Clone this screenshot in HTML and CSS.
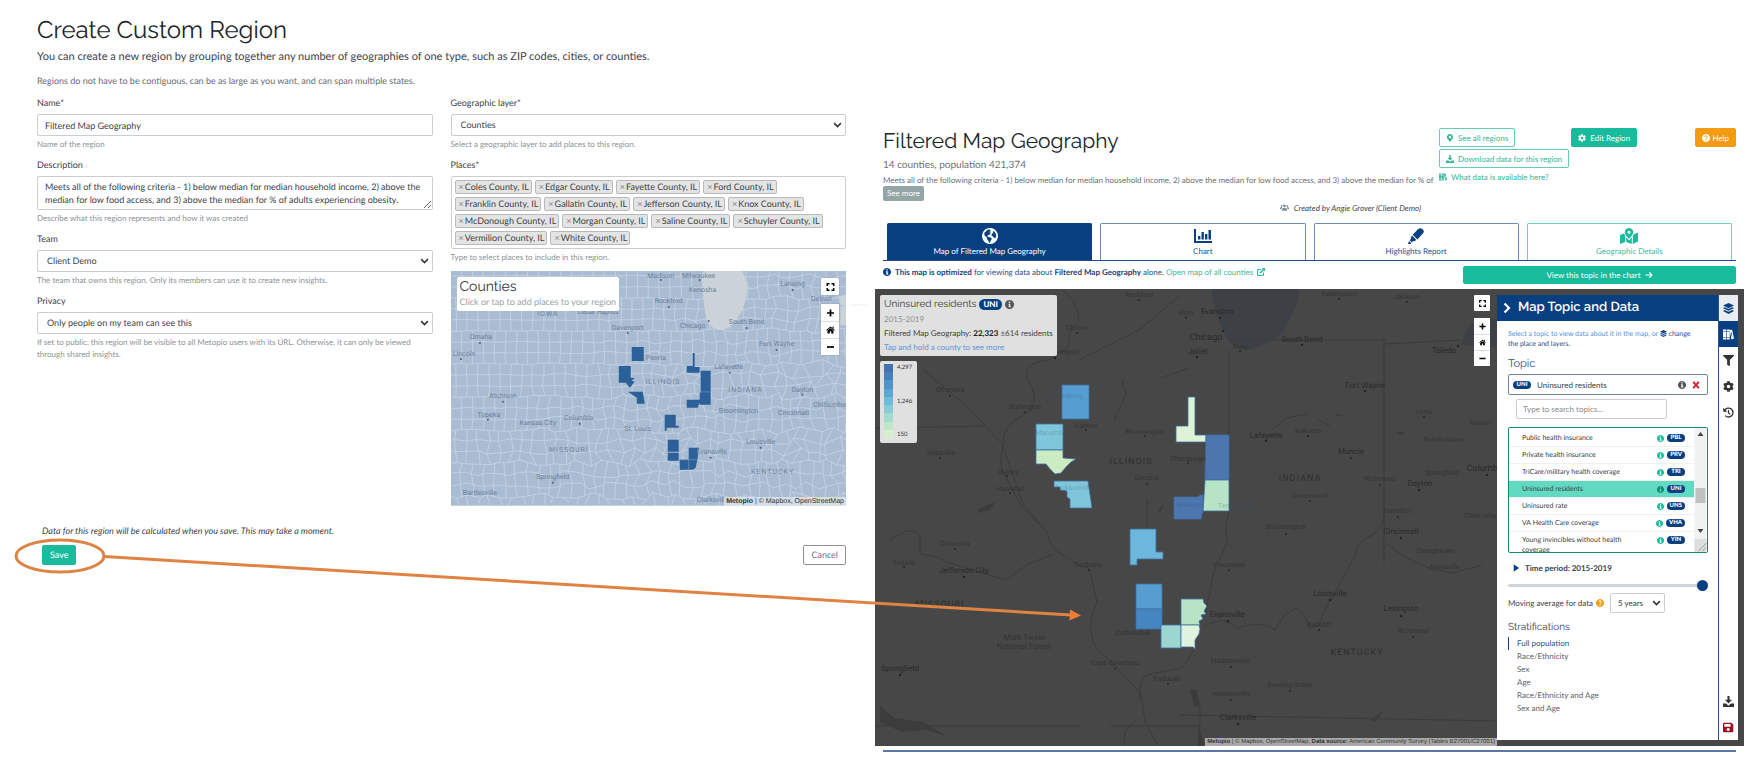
FILE: index.html
```html
<!DOCTYPE html>
<html lang="en">
<head>
<meta charset="utf-8">
<title>Create Custom Region</title>
<link rel="stylesheet" href="styles.css">
</head>
<body>
<svg class="sprite" aria-hidden="true">
  <symbol id="i-chev" viewBox="0 0 12 8"><path d="M1.5 1.5 6 6l4.5-4.5" fill="none" stroke="currentColor" stroke-width="2.2"/></symbol>
  <symbol id="i-pin" viewBox="0 0 384 512"><path d="M172.268 501.67C26.97 291.031 0 269.413 0 192 0 85.961 85.961 0 192 0s192 85.961 192 192c0 77.413-26.97 99.031-172.268 309.67-9.535 13.774-29.93 13.773-39.464 0zM192 272c44.183 0 80-35.817 80-80s-35.817-80-80-80-80 35.817-80 80 35.817 80 80 80z"/></symbol>
  <symbol id="i-cog" viewBox="0 0 512 512"><path d="M487.4 315.7l-42.6-24.6c4.3-23.2 4.3-47 0-70.2l42.6-24.6c4.9-2.8 7.1-8.6 5.5-14-11.1-35.6-30-67.8-54.7-94.6-3.8-4.1-10-5.1-14.8-2.3L380.8 110c-17.9-15.4-38.5-27.3-60.8-35.1V25.8c0-5.6-3.9-10.5-9.4-11.7-36.7-8.2-74.3-7.8-109.2 0-5.5 1.2-9.4 6.1-9.4 11.7V75c-22.2 7.9-42.8 19.8-60.8 35.1L88.7 85.5c-4.9-2.8-11-1.9-14.8 2.3-24.7 26.7-43.6 58.9-54.7 94.6-1.7 5.4.6 11.2 5.5 14L67.3 221c-4.3 23.2-4.3 47 0 70.2l-42.6 24.6c-4.9 2.8-7.1 8.6-5.5 14 11.1 35.6 30 67.8 54.7 94.6 3.8 4.1 10 5.1 14.8 2.3l42.6-24.6c17.9 15.4 38.5 27.3 60.8 35.1v49.2c0 5.6 3.9 10.5 9.4 11.7 36.7 8.2 74.3 7.8 109.2 0 5.5-1.2 9.4-6.1 9.4-11.7v-49.2c22.2-7.9 42.8-19.8 60.8-35.1l42.6 24.6c4.9 2.8 11 1.9 14.8-2.3 24.7-26.7 43.6-58.9 54.7-94.6 1.5-5.5-.7-11.3-5.6-14.1zM256 336c-44.1 0-80-35.9-80-80s35.9-80 80-80 80 35.9 80 80-35.9 80-80 80z"/></symbol>
  <symbol id="i-filter" viewBox="0 0 512 512"><path d="M487.976 0H24.028C2.71 0-8.047 25.866 7.058 40.971L192 225.941V432c0 7.831 3.821 15.17 10.237 19.662l80 55.98C298.02 518.69 320 507.493 320 487.98V225.941l184.947-184.97C520.021 25.896 509.338 0 487.976 0z"/></symbol>
  <symbol id="i-download" viewBox="0 0 16 16"><path d="M6.5 0h3v5.5h3.6L8 10.8 2.9 5.500h3.600zM0 11h4.600L8 14l3.400-3H16v5H0z"/></symbol>
  <symbol id="i-books" viewBox="0 0 18 16"><path fill-rule="evenodd" d="M0 0h5v3H0zM0 4h5v8H0zM0 13h5v3H0zM6 0h5v3H6zM6 4h5v8H6zM6 13h5v3H6zM10.800 1.200l4-1.200L18 14.600 14 16zM12.600 4.500l1.800 7 1-.300-1.700-7z"/></symbol>
  <symbol id="i-layers" viewBox="0 0 16 16"><path d="M8 0l8 3.800-8 3.800-8-3.800zM2.400 6.200L8 8.900l5.600-2.700L16 7.500l-8 3.900-8-3.900zM2.400 10.200L8 12.900l5.600-2.700L16 11.700 8 16l-8-4.300z"/></symbol>
  <symbol id="i-history" viewBox="0 0 16 16"><path d="M2.600 4.600A6.500 6.500 0 1 1 3.300 12.500" fill="none" stroke="currentColor" stroke-width="2"/><path d="M.4 1v6h6z"/><path d="M8 4.300v4.200l2.600 2" fill="none" stroke="currentColor" stroke-width="1.700"/></symbol>
  <symbol id="i-save" viewBox="0 0 16 16"><path fill-rule="evenodd" d="M1.500 1h10.700L15 3.800v9.700A1.500 1.500 0 0 1 13.500 15h-12A1.500 1.500 0 0 1 0 13.500v-11A1.500 1.500 0 0 1 1.500 1zM2 3v4h9V3zM7.500 8.600a2.300 2.300 0 1 0 .01 0z"/></symbol>
  <symbol id="i-info" viewBox="0 0 16 16"><path fill-rule="evenodd" d="M8 0a8 8 0 1 0 .01 0zM6.700 2.700h2.600v2.500H6.700zM6 6.500h3.500v4.500h1v2H6v-2h1V8.300H6z"/></symbol>
  <symbol id="i-help" viewBox="0 0 16 16"><path d="M8 0a8 8 0 1 0 .01 0z"/><path d="M5.300 6c.2-3.600 5.600-3.200 5.400 0-.1 1.700-2.600 1.700-2.600 3.600" fill="none" stroke="var(--cut,#fff)" stroke-width="1.900"/><circle cx="8.100" cy="12" r="1.300" fill="var(--cut,#fff)"/></symbol>
  <symbol id="i-home" viewBox="0 0 18 16"><path d="M9 1l8.500 7-1.200 1.500L9 3.500 1.700 9.500.5 8zM13 1.500h2.500v4L13 3.500zM3 9.500l6-5 6 5V15h-4.500v-4.500h-3V15H3z"/></symbol>
  <symbol id="i-full" viewBox="0 0 16 16"><path d="M1.500 6V1.500H6M10 1.500h4.500V6M14.500 10v4.500H10M6 14.500H1.500V10" fill="none" stroke="currentColor" stroke-width="2.800"/></symbol>
  <symbol id="i-plus" viewBox="0 0 16 16"><path d="M6.300 1h3.400v5.300H15v3.400H9.700V15H6.300V9.700H1V6.300h5.300z"/></symbol>
  <symbol id="i-minus" viewBox="0 0 16 16"><path d="M1 6.300h14v3.400H1z"/></symbol>
  <symbol id="i-globe" viewBox="0 0 16 16"><path fill-rule="evenodd" d="M8 0a8 8 0 1 0 .01 0zM2.300 4.800 4 3.500l1.200-1.800 2.500-.200L9 2.900 7.200 4.100l1.500.700-.500 1.500-2 .800-.900 1.200 1.200.600 2.200.700 1.200 1.400-1.200 1.500-.600 2-1.100.3-.9-2.600L5 11 4.700 9 2.600 7.800zM11 2.800l2 1.500 1.300 2.900-.3 2-1.700 1.100-1.200-1.700-1.500-.800L9.700 6l1.500-1.300z"/></symbol>
  <symbol id="i-chart" viewBox="0 0 18 14"><path d="M0 0h2v12h16v2H0zM4 7h2.400v3.500H4zM7.500 3h2.400v7.500H7.500zM11 5h2.400v5.500H11zM14.500 1H17v9.500h-2.500z"/></symbol>
  <symbol id="i-marker" viewBox="0 0 18 18"><path d="M11.200 1.400C12.700 0 14.300-.200 16 1s2.500 3.200 1.100 4.700L10.600 13 5.300 7.600zM4.500 8.500l5 5L7 14.800l-1.300-.100-1.200 1.500-2.600-2.500 1.300-1.300V11zM1.200 14.500l2.400 2.300L2.800 18H0z"/></symbol>
  <symbol id="i-mapmark" viewBox="0 0 18 16"><path fill-rule="evenodd" d="M9 0a4.200 4.200 0 0 1 4.200 4.200C13.200 6.500 9 11 9 11S4.800 6.500 4.800 4.200A4.200 4.200 0 0 1 9 0zM9 2.700a1.500 1.500 0 1 0 .01 0zM0 7l4-1.500 1.200 2.300V14L0 16zM6.200 9.300 9 12.600l2.800-3.300V16l-5.600-2zM12.800 7.800 14 6l4-1.500v9L12.800 16z"/></symbol>
  <symbol id="i-users" viewBox="0 0 20 14"><circle cx="10" cy="3.500" r="3"/><circle cx="3.500" cy="3.500" r="2"/><circle cx="16.500" cy="3.500" r="2"/><path d="M4.500 14v-3q0-3.500 5.500-3.500t5.500 3.500v3zM0 11V8q0-2 4.500-2L3.500 11zM20 11V8q0-2-4.500-2l1 5z"/></symbol>
  <symbol id="i-ext" viewBox="0 0 16 16"><path d="M8 3H1.200v11.800H13V9" fill="none" stroke="currentColor" stroke-width="2"/><path d="M9.500 0H16v6.500l-2.200-2.200-6.600 6.600-2-2 6.500-6.600z"/></symbol>
  <symbol id="i-arrow" viewBox="0 0 16 14"><path d="M1 7h13M8.500 1.500 14 7l-5.500 5.500" fill="none" stroke="currentColor" stroke-width="2.300"/></symbol>
</svg>

<main class="page">
  <form class="editor">
    <h1 class="title">Create Custom Region</h1>
    <p class="lead">You can create a new region by grouping together any number of geographies of one type, such as ZIP codes, cities, or counties.</p>
    <p class="hint">Regions do not have to be contiguous, can be as large as you want, and can span multiple states.</p>
    <div class="columns">
      <div class="column">
        <div class="field">
          <label for="name">Name*</label>
          <input class="control" id="name" type="text" value="Filtered Map Geography">
          <p class="help">Name of the region</p>
        </div>
        <div class="field">
          <label for="desc">Description</label>
          <textarea class="control area" id="desc">Meets all of the following criteria - 1) below median for median household income, 2) above the median for low food access, and 3) above the median for % of adults experiencing obesity.</textarea>
          <p class="help">Describe what this region represents and how it was created</p>
        </div>
        <div class="field">
          <label for="team">Team</label>
          <div class="pick"><select class="control" id="team"><option>Client Demo</option></select><svg class="caret"><use href="#i-chev"/></svg></div>
          <p class="help">The team that owns this region. Only its members can use it to create new insights.</p>
        </div>
        <div class="field">
          <label for="privacy">Privacy</label>
          <div class="pick"><select class="control" id="privacy"><option>Only people on my team can see this</option></select><svg class="caret"><use href="#i-chev"/></svg></div>
          <p class="help">If set to public, this region will be visible to all Metopio users with its URL. Otherwise, it can only be viewed through shared insights.</p>
        </div>
      </div>
      <div class="column">
        <div class="field">
          <label for="layer">Geographic layer*</label>
          <div class="pick"><select class="control" id="layer"><option>Counties</option></select><svg class="caret"><use href="#i-chev"/></svg></div>
          <p class="help">Select a geographic layer to add places to this region.</p>
        </div>
        <div class="field">
          <span class="label">Places*</span>
          <ul class="tags">
            <li><button type="button">×</button>Coles County, IL</li><li><button type="button">×</button>Edgar County, IL</li><li><button type="button">×</button>Fayette County, IL</li><li><button type="button">×</button>Ford County, IL</li><li><button type="button">×</button>Franklin County, IL</li><li><button type="button">×</button>Gallatin County, IL</li><li><button type="button">×</button>Jefferson County, IL</li><li><button type="button">×</button>Knox County, IL</li><li><button type="button">×</button>McDonough County, IL</li><li><button type="button">×</button>Morgan County, IL</li><li><button type="button">×</button>Saline County, IL</li><li><button type="button">×</button>Schuyler County, IL</li><li><button type="button">×</button>Vermilion County, IL</li><li><button type="button">×</button>White County, IL</li>
          </ul>
          <p class="help">Type to select places to include in this region.</p>
        </div>
        <div class="minimap">
          <svg class="canvas" viewBox="450 272 396 235" preserveAspectRatio="xMidYMid slice">
            <rect x="450" y="272" width="396" height="235" fill="#a9bcd2"/>
            <g id="mesh" fill="none" stroke="#c6d5e6" stroke-width=".8"></g>
            <path d="M703 272C700 290 704 312 706 322Q714 334 726 330C740 322 748 300 746 284L742 272ZM838 298l8-3v12l-6-1zM840 308h6v18h-6z" fill="#ccd3d8"/>
            <g fill="#2c6099">
              <path d="M631 348h12v14h-12zM618 367h12v12h4l-3 3 3 1-5 6-4-5h-7zM627 393h15l2 12h-8v-6l-6-4zM692 354l2 0v14h5v6h-13v-7h6zM700 372h10v34h-11v-12h1zM686 401h14l-3 8h-11zM664 416h11v11h3v2h-12v3h-2zM667 441h11v12h-11zM667 454h11v8h-11zM688 449h10l-1 10-2 10-3 2h-13v-10h9z"/>
            </g>
            <path d="M700 393h10M688 461h8M679 461h9v10" stroke="#7c9fc4" stroke-width=".6" fill="none"/>
            <g class="places">
              <text x="660" y="279">Madison</text><text x="698" y="279">Milwaukee</text><text x="702" y="293">Kenosha</text><text x="668" y="304">Rockford</text><text x="692" y="329">Chicago</text><text x="746" y="325">South Bend</text><text x="627" y="331">Davenport</text><text x="597" y="315">Cedar Rapids</text><text x="480" y="340">Omaha</text><text x="463" y="357">Lincoln</text><text x="655" y="361">Peoria</text><text x="792" y="287">Lansing</text><text x="821" y="302">Detroit</text><text x="776" y="347">Fort Wayne</text><text x="728" y="370">Lafayette</text><text x="802" y="393">Dayton</text><text x="738" y="414">Bloomington</text><text x="793" y="416">Cincinnati</text><text x="829" y="408">Chillicothe</text><text x="502" y="399">Atchison</text><text x="488" y="418">Topeka</text><text x="537" y="426">Kansas City</text><text x="578" y="421">Columbia</text><text x="637" y="432">St. Louis</text><text x="760" y="445">Louisville</text><text x="711" y="455">Evansville</text><text x="552" y="480">Springfield</text><text x="479" y="496">Bartlesville</text><text x="712" y="503">Clarksville</text>
              <g class="state"><text x="547" y="317">IOWA</text><text x="662" y="385">ILLINOIS</text><text x="745" y="393">INDIANA</text><text x="568" y="453">MISSOURI</text><text x="772" y="475">KENTUCKY</text></g>
            </g>
            <g fill="#4d5e75"><circle cx="660" cy="281" r="1"/><circle cx="699" cy="281" r="1"/><circle cx="668" cy="308" r="1"/><circle cx="708" cy="322" r="1"/><circle cx="746" cy="329" r="1"/><circle cx="627" cy="334" r="1"/><circle cx="479" cy="344" r="1"/><circle cx="460" cy="360" r="1"/><circle cx="792" cy="291" r="1"/><circle cx="776" cy="351" r="1"/><circle cx="729" cy="374" r="1"/><circle cx="802" cy="396" r="1"/><circle cx="502" cy="403" r="1"/><circle cx="487" cy="421" r="1"/><circle cx="579" cy="425" r="1"/><circle cx="760" cy="449" r="1"/><circle cx="710" cy="459" r="1"/><circle cx="552" cy="484" r="1"/></g>
          </svg>
          <div class="mapcard"><h2>Counties</h2><p>Click or tap to add places to your region</p></div>
          <div class="mapctl big">
            <button type="button" class="solo" aria-label="Full screen"><svg><use href="#i-full"/></svg></button>
            <div class="stack"><button type="button" aria-label="Zoom in"><svg><use href="#i-plus"/></svg></button><button type="button" aria-label="Home"><svg><use href="#i-home"/></svg></button><button type="button" aria-label="Zoom out"><svg><use href="#i-minus"/></svg></button></div>
          </div>
          <p class="credit"><b>Metopio</b> | © Mapbox, OpenStreetMap</p>
        </div>
      </div>
    </div>
    <div class="submit">
      <p>Data for this region will be calculated when you save. This may take a moment.</p>
      <div class="actions"><button type="button" class="btn save">Save</button><button type="button" class="btn cancel">Cancel</button></div>
    </div>
  </form>

  <section class="region">
    <div class="inner">
      <header class="head">
        <div class="about">
          <h1 class="title">Filtered Map Geography</h1>
          <p class="sub">14 counties, population 421,374</p>
          <p class="desc">Meets all of the following criteria - 1) below median for median household income, 2) above the median for low food access, and 3) above the median for % of</p>
          <button type="button" class="more">See more</button>
          <p class="by"><svg><use href="#i-users"/></svg>Created by Angie Grover (Client Demo)</p>
        </div>
        <div class="tools">
          <div class="toolcol">
            <button type="button" class="btn line"><svg><use href="#i-pin"/></svg>See all regions</button>
            <button type="button" class="btn line"><svg><use href="#i-download"/></svg>Download data for this region</button>
            <a href="#data" class="what"><svg><use href="#i-books"/></svg>What data is available here?</a>
          </div>
          <button type="button" class="btn green"><svg><use href="#i-cog"/></svg>Edit Region</button>
          <button type="button" class="btn orange"><svg><use href="#i-help"/></svg>Help</button>
        </div>
      </header>
      <nav class="tabs">
        <a href="#map" class="on"><svg><use href="#i-globe"/></svg>Map of Filtered Map Geography</a>
        <a href="#chart"><svg><use href="#i-chart"/></svg>Chart</a>
        <a href="#report"><svg><use href="#i-marker"/></svg>Highlights Report</a>
        <a href="#details" class="alt"><svg><use href="#i-mapmark"/></svg>Geographic Details</a>
      </nav>
      <div class="notice">
        <p><svg><use href="#i-info"/></svg><b>This map is optimized</b> for viewing data about <b>Filtered Map Geography</b> alone. <a href="#all">Open map of all counties<svg class="ext"><use href="#i-ext"/></svg></a></p>
        <button type="button" class="btn green wide">View this topic in the chart<svg><use href="#i-arrow"/></svg></button>
      </div>
    </div>
    <div class="bigmap">
      <svg class="canvas" viewBox="875 289 869 457" preserveAspectRatio="xMidYMid slice">
        <rect x="875" y="289" width="869" height="457" fill="#474747"/>
        <path d="M1212 289C1213 305 1218 322 1226 336Q1234 350 1245 350C1270 346 1286 334 1290 318Q1297 308 1300 289ZM1461 345q5-22 20-26h16v28z" fill="#3d4045"/>
        <g fill="none" stroke="#3b3b3b" stroke-width="1">
          <path d="M1229 350v130M1229 340h155M1384 338v225M1384 344l76-4M923 370l45 37 34 37 21 60 22 26M875 428l110-2M990 648" />
          <path d="M1062 290q16 10 17 30-12 10-10 26l-20 14q-25 2-22 18 12 18 4 32l-18 12q-12 12-9 22-6 16-1 28l18 34 26 26q4 20 22 26 10 10 20 10l8 34q-16 36 8 54 20 20 36 38l4 28q14 24 20 40l-6 38-24 20-8 20M1140 700q-2-24 10-26l32-6 12-18M1079 360l60-30 40-34M1147 500v60M1229 511q-6 20-1 30l-14 30q-4 20-8 40M1205 626q20-12 32 2l16-4q14 0 22 6l10-16 12-6q10 8 12 20l10-2q6-20 14-30l22-40q2-16 16-20 14-8 14-28M1386 543q30 26 66 30l30-8M1180 715l320 6M875 726h205M1110 726h90M1190 690q12 10 10 30t6 26M1125 746q-4-16 8-22"/>
          <path d="M1114 420l12-26-4-14M1160 378l30-10M1272 430l14-12 22-4M1318 420l12 6M890 540q22-16 30-4v18q20 2 26 8l60 18 22-16 26-10"/>
        </g>
        <g fill="#3c3c3c"><path d="M977 510l18-8-5 8-12 3zM880 706l14 12 30 4 22 14-20-6-24 2-22-10zM1190 690l6-1 4 16-6 2zM1198 728l5 12 0 6-5 0zM1370 720l14-10-8 12zM1333 413l10 2-4 2zM1396 432h10l-5 3zM1158 510l6-6-4 8z"/></g>
        <g stroke="#3f6ea3" stroke-width=".8">
          <path fill="#559fd0" d="M1062 385h27v34h-27z"/>
          <path fill="#80c6da" d="M1036 424h27v26h-27z"/>
          <path fill="#cbecc2" d="M1036 450h27v8l13 1-5 3-5 5-5 6-6 1-5-5-4-5h-10z"/>
          <path fill="#80c6da" d="M1054 481h34l4 27h-22v-9l-3-2v-6l-7-1v-3h-6z"/>
          <path fill="#def2d6" d="M1188 397h7v38h11v7h-30v-16h12z"/>
          <path fill="#4b76ae" d="M1206 435h23v45h-24z"/>
          <path fill="#b6e4c5" d="M1205 480h24v31h-26l1-15z"/>
          <path fill="#4b76ae" d="M1174 497h24l2-2h3v15l-2 9h-27z"/>
          <path fill="#6bb8dc" d="M1130 529h26v23h7v7h-26v6h-7z"/>
          <path fill="#579dcf" d="M1136 584h26v25h-26z"/>
          <path fill="#4586c0" d="M1136 609h26v20h-26z"/>
          <path fill="#b8e4c5" d="M1181 599h22l1 4 3 3-3 5 2 3-5 1 2 4-4 2 1 4h-19z"/>
          <path fill="#9bd6d0" d="M1161 625h20v23h-20z"/>
          <path fill="#e2f3dd" d="M1181 625h18l1 4-1 5-4 6 0 9-2-2h-12z"/>
        </g>
        <g class="places dark">
          <text x="1139" y="297">Rockford</text><text x="1186" y="315">Elgin</text><text x="1077" y="330">Clinton</text><text x="1064" y="354">Davenport</text><text x="950" y="392">Ottumwa</text><text x="1025" y="409">Burlington</text><text x="1086" y="428">Canton</text><text x="1145" y="434">Bloomington</text><text x="941" y="455">Kirksville</text><text x="1008" y="474">Quincy</text><text x="1010" y="491">Hannibal</text><text x="1147" y="480">Decatur</text><text x="1188" y="461">Champaign</text><text x="1339" y="296">Kalamazoo</text><text x="1407" y="299">Jackson</text><text x="1240" y="349">Gary</text><text x="1424" y="414">Lima</text><text x="1480" y="425">Marion</text><text x="1444" y="442">Bellefontaine</text><text x="1308" y="433">Kokomo</text><text x="1442" y="475">Springfield</text><text x="1380" y="481">Richmond</text><text x="1310" y="498">Greenwood</text><text x="1398" y="513">Hamilton</text><text x="1286" y="529">Bloomington</text><text x="1480" y="518">Chillicothe</text><text x="955" y="546">Columbia</text><text x="904" y="565">Sedalia</text><text x="1088" y="567">Centralia</text><text x="1229" y="567">Vincennes</text><text x="1436" y="553">Georgetown</text><text x="1445" y="569">Maysville</text><text x="1319" y="627">Radcliff</text><text x="1413" y="633">Richmond</text><text x="1133" y="635">Carbondale</text><text x="1115" y="665">Cape Girardeau</text><text x="1230" y="663">Madisonville</text><text x="1167" y="681">Paducah</text><text x="1290" y="687">Bowling Green</text><text x="1231" y="696">Hopkinsville</text><text x="1024" y="640" class="park">Mark Twain</text><text x="1024" y="649" class="park">National Forest</text>
          <g class="faint"><text x="1067" y="398">Galesburg</text><text x="1049" y="435">Macomb</text><text x="1073" y="490">Jacksonville</text><text x="1236" y="508">Terre Haute</text><text x="1190" y="507">Mattoon</text></g>
          <g class="city"><text x="1217" y="314">Evanston</text><text x="1206" y="340" class="lg">Chicago</text><text x="1198" y="354">Joliet</text><text x="1302" y="342">South Bend</text><text x="1444" y="353">Toledo</text><text x="1365" y="388">Fort Wayne</text><text x="1266" y="438">Lafayette</text><text x="1351" y="454">Muncie</text><text x="1420" y="486">Dayton</text><text x="1487" y="471" class="lg">Columbus</text><text x="1401" y="534">Cincinnati</text><text x="964" y="573">Jefferson City</text><text x="900" y="671">Springfield</text><text x="1227" y="617">Evansville</text><text x="1330" y="596">Louisville</text><text x="1401" y="611">Lexington</text><text x="1238" y="720">Clarksville</text></g>
          <g class="state"><text x="1131" y="464">ILLINOIS</text><text x="1300" y="481">INDIANA</text><text x="940" y="607">MISSOURI</text><text x="1357" y="655">KENTUCKY</text></g>
        </g>
        <g fill="#242424"><circle cx="1139" cy="300" r="1"/><circle cx="1186" cy="318" r="1"/><circle cx="1077" cy="333" r="1"/><circle cx="1055" cy="358" r="1.200"/><circle cx="950" cy="396" r="1"/><circle cx="1025" cy="412" r="1"/><circle cx="1086" cy="430" r="1"/><circle cx="1145" cy="436" r="1"/><circle cx="940" cy="458" r="1"/><circle cx="1007" cy="476" r="1"/><circle cx="1010" cy="493" r="1"/><circle cx="1147" cy="484" r="1"/><circle cx="1188" cy="463" r="1"/><circle cx="1220" cy="318" r="1.200"/><circle cx="1223" cy="331" r="1.200"/><circle cx="1197" cy="357" r="1.200"/><circle cx="1240" cy="351" r="1"/><circle cx="1302" cy="345" r="1.200"/><circle cx="1339" cy="299" r="1"/><circle cx="1407" cy="302" r="1"/><circle cx="1458" cy="346" r="1.200"/><circle cx="1365" cy="391" r="1.200"/><circle cx="1424" cy="417" r="1"/><circle cx="1266" cy="441" r="1.200"/><circle cx="1308" cy="436" r="1"/><circle cx="1351" cy="458" r="1"/><circle cx="1419" cy="490" r="1.200"/><circle cx="1487" cy="475" r="1.200"/><circle cx="1380" cy="485" r="1"/><circle cx="1310" cy="501" r="1"/><circle cx="1398" cy="517" r="1"/><circle cx="1286" cy="534" r="1"/><circle cx="1401" cy="538" r="1.200"/><circle cx="955" cy="549" r="1"/><circle cx="964" cy="577" r="1.200"/><circle cx="904" cy="567" r="1"/><circle cx="1089" cy="570" r="1"/><circle cx="1229" cy="570" r="1"/><circle cx="1228" cy="621" r="1.200"/><circle cx="1330" cy="600" r="1.200"/><circle cx="1401" cy="616" r="1.200"/><circle cx="1413" cy="637" r="1"/><circle cx="1319" cy="630" r="1"/><circle cx="900" cy="675" r="1.200"/><circle cx="1115" cy="669" r="1"/><circle cx="1231" cy="667" r="1"/><circle cx="1168" cy="684" r="1"/><circle cx="1290" cy="691" r="1"/><circle cx="1231" cy="700" r="1"/><circle cx="1238" cy="724" r="1.200"/></g>
      </svg>
      <div class="overlay">
        <div class="infocol">
          <div class="info">
            <h2>Uninsured residents <span class="pill lgp">UNI</span> <svg><use href="#i-info"/></svg></h2>
            <p class="yr">2015-2019</p>
            <p>Filtered Map Geography: <b>22,323</b> ±614 residents</p>
            <p class="tap">Tap and hold a county to see more</p>
          </div>
          <div class="legend"><span class="ramp"></span><div class="ticks"><span>4,297</span><span>1,246</span><span>150</span></div></div>
        </div>
        <div class="mapctl">
          <button type="button" class="solo" aria-label="Full screen"><svg><use href="#i-full"/></svg></button>
          <div class="stack"><button type="button" aria-label="Zoom in"><svg><use href="#i-plus"/></svg></button><button type="button" aria-label="Home"><svg><use href="#i-home"/></svg></button><button type="button" aria-label="Zoom out"><svg><use href="#i-minus"/></svg></button></div>
        </div>
        <aside class="panel">
          <div class="pmain">
            <h2 class="phead"><svg><use href="#i-chev"/></svg>Map Topic and Data</h2>
            <div class="pbody">
              <p class="intro">Select a topic to view data about it in the map, or <a href="#layers"><svg><use href="#i-layers"/></svg>&nbsp;change the place and layers.</a></p>
              <h3 class="topic">Topic</h3>
              <div class="chosen"><span class="pill">UNI</span><span class="nm">Uninsured residents</span><svg class="ci"><use href="#i-info"/></svg><button type="button" aria-label="Clear"><svg viewBox="0 0 10 10"><path d="M1.500 1 8.500 9M8.500 1 1.500 9" stroke="#d3202c" stroke-width="2.400"/></svg></button></div>
              <input class="search" type="text" placeholder="Type to search topics..." aria-label="Search topics">
              <div class="listbox">
                <ul>
                  <li><span>Public health insurance</span><svg><use href="#i-info"/></svg><span class="pill">PBL</span></li>
                  <li><span>Private health insurance</span><svg><use href="#i-info"/></svg><span class="pill">PRV</span></li>
                  <li><span>TriCare/military health coverage</span><svg><use href="#i-info"/></svg><span class="pill">TRI</span></li>
                  <li class="sel"><span>Uninsured residents</span><svg><use href="#i-info"/></svg><span class="pill">UNI</span></li>
                  <li><span>Uninsured rate</span><svg><use href="#i-info"/></svg><span class="pill">UNS</span></li>
                  <li><span>VA Health Care coverage</span><svg><use href="#i-info"/></svg><span class="pill">VHA</span></li>
                  <li><span>Young invincibles without health coverage</span><svg><use href="#i-info"/></svg><span class="pill">YIN</span></li>
                </ul>
                <svg class="bar" viewBox="0 0 12 124"><path d="M0 0h12v124H0z" fill="#f1f1f1"/><path d="M0 111h12v13H0z" fill="#dedede"/><path d="M1 60h10v15H1z" fill="#c1c1c1"/><path d="M3 8l3-4 3 4zM3 101l3 4 3-4z" fill="#444"/><path d="M4 123l8-8M8 123l4-4" stroke="#888" stroke-width=".8"/></svg>
              </div>
              <p class="time"><svg viewBox="0 0 8 10"><path d="M1 0l7 5-7 5z"/></svg>Time period: 2015-2019</p>
              <input class="slider" type="range" value="100" aria-label="Time period">
              <div class="avg"><label for="avg">Moving average for data</label><svg class="q"><use href="#i-help"/></svg><div class="pick"><select class="control" id="avg"><option>5 years</option></select><svg class="caret"><use href="#i-chev"/></svg></div></div>
              <h3 class="strat">Stratifications</h3>
              <ul class="slist"><li class="cur"><a href="#full">Full population</a></li><li><a href="#race">Race/Ethnicity</a></li><li><a href="#sex">Sex</a></li><li><a href="#age">Age</a></li><li><a href="#raceage">Race/Ethnicity and Age</a></li><li><a href="#sexage">Sex and Age</a></li></ul>
            </div>
          </div>
          <div class="rail">
            <button type="button" class="lay" aria-label="Layers"><svg><use href="#i-layers"/></svg></button>
            <button type="button" class="cur" aria-label="Topics"><svg><use href="#i-books"/></svg></button>
            <button type="button" aria-label="Filter"><svg><use href="#i-filter"/></svg></button>
            <button type="button" aria-label="Settings"><svg><use href="#i-cog"/></svg></button>
            <button type="button" aria-label="History"><svg><use href="#i-history"/></svg></button>
            <button type="button" class="push" aria-label="Download"><svg><use href="#i-download"/></svg></button>
            <button type="button" class="red" aria-label="Save"><svg><use href="#i-save"/></svg></button>
          </div>
        </aside>
      </div>
      <p class="credit faded"><b>Metopio</b> | © Mapbox, OpenStreetMap, <b>Data source:</b> American Community Survey (Tables B27001/C27001)</p>
    </div>
    <hr class="rule">
  </section>
  <svg class="callout" viewBox="0 0 1761 767" aria-hidden="true">
    <path d="M851 305h16" stroke="#eee"/>
    <ellipse cx="60" cy="556" rx="44" ry="16" fill="none" stroke="#de8344" stroke-width="3"/>
    <path d="M104 556.500 1071 615" stroke="#de8344" stroke-width="3"/>
    <path d="M1070 609.500 1081 615.500 1069.500 620.500z" fill="#ed7d31"/>
  </svg>
</main>
<script src="mesh.js"></script>
</body>
</html>
```
FILE: styles.css
```css
* { box-sizing: border-box; }
body { margin: 0; background: #fff; font-family: Lato, "Liberation Sans", sans-serif; font-size: 9px; line-height: 14px; color: #3c4248; text-rendering: geometricPrecision; }
h1, h2, h3, p, ul { margin: 0; padding: 0; font-weight: 400; }
ul { list-style: none; }
a { text-decoration: none; color: inherit; }
button, input, select, textarea { font: inherit; color: inherit; margin: 0; text-rendering: inherit; }
button { cursor: pointer; padding: 0; }
svg { fill: currentColor; flex: none; }
.sprite { display: none; }
.page { position: relative; display: grid; grid-template-columns: 809fr 869fr; column-gap: 29px; padding: 0 17px 0 37px; }
.title { font-family: Raleway, Lato, sans-serif; color: #20242a; }
.editor .title { font-size: 24px; line-height: 32px; margin-top: 14px; }
.lead { font-size: 11px; line-height: 18px; margin-top: 2px; }
.hint { margin-top: 8px; color: #666c71; }
.columns { display: grid; grid-template-columns: 1fr 1fr; gap: 18px; margin-top: 8px; align-items: start; }
.field { display: flex; flex-direction: column; margin-bottom: 8px; }
.field label, .label { margin-bottom: 4px; }
.control { display: block; width: 100%; height: 22px; border: 1px solid #c9ced2; border-radius: 2px; background: #fff; padding: 0 7px; outline: 0; }
.area { height: 34px; padding: 3px 7px; line-height: 13px; overflow: hidden; }
.pick { position: relative; }
.pick .control { appearance: none; padding-left: 9px; }
.caret { position: absolute; right: 4px; top: 8px; width: 9px; height: 6px; color: #33383d; pointer-events: none; }
.help { margin-top: 2px; font-size: 8px; line-height: 12px; color: #8b9397; }
.tags { display: flex; flex-wrap: wrap; gap: 3px; border: 1px solid #c9ced2; border-radius: 2px; padding: 3px; }
.tags li { display: flex; align-items: center; height: 14px; border: 1px solid #b9b9b9; border-radius: 2px; background: #e4e4e4; padding: 0 2px 0 3px; }
.tags button { border: 0; background: none; color: #888; padding-right: 1px; line-height: 12px; }
.minimap, .bigmap { position: relative; overflow: hidden; }
.minimap { aspect-ratio: 396 / 235; }
.canvas { position: absolute; inset: 0; width: 100%; height: 100%; }
.places { font: 7px Roboto, sans-serif; text-anchor: middle; fill: #6b7f99; }
.places .state { font-size: 7px; letter-spacing: 1px; fill: #71849d; }
.places.dark { fill: #343434; }
.dark .city { font-size: 8px; fill: #2a2a2a; }
.dark .lg { font-size: 9px; }
.dark .state { font-size: 9px; letter-spacing: 1px; fill: #2e2e2e; }
.dark .faint { fill: #34507055; }
.dark .park { font-size: 8px; }
.mapcard { position: absolute; left: 6px; top: 6px; background: #fff; border-radius: 2px; padding: 2px 3px; }
.mapcard h2 { font: 14px/16px Raleway, Lato, sans-serif; color: #2f343a; }
.mapcard p { line-height: 14px; color: #9aa3a5; }
.mapctl { display: flex; flex-direction: column; gap: 7px; width: 16px; }
.mapctl.big { position: absolute; top: 7px; right: 7px; width: 18px; gap: 9px; }
.mapctl button { display: flex; align-items: center; justify-content: center; width: 100%; height: 16px; border: 0; background: #fff; color: #000; }
.mapctl.big button { height: 17px; }
.mapctl .solo { border-radius: 1px; box-shadow: 0 0 1px #555; }
.stack { border-radius: 1px; box-shadow: 0 0 1px #555; }
.stack button + button { border-top: 1px solid #ddd; }
.mapctl svg { width: 7px; height: 7px; }
.mapctl.big svg { width: 9px; height: 8px; }
.credit { position: absolute; right: 0; bottom: 0; padding: 0 2px; background: #dfe5eccc; font: 7px/9px "Liberation Sans", sans-serif; color: #333; }
.submit { padding-left: 5px; margin-top: 18px; }
.submit p { font-style: italic; }
.actions { display: flex; justify-content: space-between; margin-top: 7px; }
.btn { display: inline-flex; align-items: center; justify-content: center; gap: 4px; height: 19px; border: 1px solid #66cdb5; border-radius: 2px; background: #fff; padding: 0 6px; white-space: nowrap; font-size: 8px; }
.save { background: #18bc9c; border-color: #18bc9c; color: #fff; height: 20px; }
.cancel { border-color: #8b9196; color: #70767b; height: 20px; }
.submit .btn { font-size: 9px; padding: 0 7px; }
.region { min-width: 0; font-size: 8px; }
.inner { padding: 126px 8px 0; }
.head { display: grid; grid-template-columns: minmax(0, 1fr) 297px; gap: 4px; }
.region .title { font-size: 21px; line-height: 30px; }
.sub { font-size: 10px; line-height: 18px; color: #6b7176; }
.desc { line-height: 12px; color: #6b7176; }
.more { display: block; border: 0; border-radius: 2px; background: #95a5a6; color: #fff; line-height: 15px; padding: 0 4px; }
.by { text-align: right; font-style: italic; line-height: 15px; padding-right: 14px; }
.by svg { width: 9px; height: 7px; margin-right: 5px; color: #7f9092; }
.tools { display: flex; gap: 2px; align-items: flex-start; padding-top: 2px; }
.toolcol { display: flex; flex-direction: column; align-items: flex-start; gap: 2px; color: #35b698; }
.btn svg { width: 8px; height: 8px; }
.line { color: #35b698; }
.what svg { width: 8px; height: 8px; margin-right: 4px; vertical-align: -1px; }
.green { background: #18bc9c; border-color: #18bc9c; color: #fff; }
.orange { background: #f39c12; border-color: #f39c12; color: #fff; margin-left: auto; gap: 2px; --cut: #f39c12; }
.tabs { display: grid; grid-template-columns: repeat(4, 1fr); gap: 8px; padding: 0 4px; border-bottom: 1px solid #1f4c8c; margin-top: 7px; }
.tabs a { display: flex; flex-direction: column; align-items: center; gap: 1px; height: 37px; padding-top: 4px; border: 1px solid #6d8cb8; border-bottom: 0; border-radius: 2px 2px 0 0; color: #28528f; line-height: 12px; }
.tabs svg { width: 18px; height: 16px; color: #0a3f80; }
.tabs .on { background: #083f80; border-color: #083f80; color: #fff; }
.tabs .on svg { color: #fff; }
.tabs .alt { border-color: #70d0ba; color: #45b99e; }
.tabs .alt svg { color: #18bc9c; }
.notice { display: flex; justify-content: space-between; padding: 5px 0; color: #27508a; line-height: 12px; }
.notice b { color: #1b3f74; }
.notice p svg { width: 8px; height: 8px; margin-right: 4px; vertical-align: -1px; color: #083f80; }
.notice a, .notice .ext { color: #35bd9d; }
.notice p .ext { margin: 0 0 0 4px; color: #18bc9c; }
.wide { width: 32%; height: 18px; }
.bigmap { min-height: 457px; display: flex; background: #474747; }
.overlay { position: relative; flex: 1; display: flex; align-items: flex-start; padding: 6px 6px 6px 5px; gap: 7px; }
.infocol { margin-right: auto; display: flex; flex-direction: column; align-items: flex-start; gap: 5px; }
.info, .legend { background: #e0e0e0; border-radius: 2px; padding: 2px 4px; }
.info { line-height: 14px; }
.info h2 { font: 10px/15px Raleway, Lato, sans-serif; color: #3c4146; display: flex; align-items: center; gap: 3px; }
.info h2 svg { width: 9px; height: 9px; color: #555; }
.info .yr { color: #8d9396; }
.info b { color: #222; }
.info .tap { color: #5b97d8; }
.pill { display: inline-block; min-width: 18px; text-align: center; border-radius: 5px; background: #083f80; color: #fff; font: 900 6px/8px Lato, sans-serif; padding: 0 3px; }
.lgp { font-size: 8px; line-height: 11px; border-radius: 6px; padding: 0 4px; }
.legend { display: flex; gap: 4px; padding: 3px 5px 4px 4px; height: 82px; }
.ramp { width: 9px; background: linear-gradient(#4273ae 0 11%, #4580bb 11% 22%, #4f93c8 22% 33%, #5ba7d3 33% 44%, #70bbd9 44% 55%, #86cbd6 55% 66%, #a4dacb 66% 77%, #bfe6c6 77% 88%, #d5efd0 88%); }
.ticks { display: flex; flex-direction: column; justify-content: space-between; font-size: 6px; line-height: 8px; color: #333; }
.panel { width: 241px; align-self: stretch; display: flex; background: #fff; color: #3c4248; }
.pmain { flex: 1; min-width: 0; }
.phead { display: flex; align-items: center; gap: 5px; height: 26px; background: #083f80; color: #fff; font: 600 13px/26px Raleway, Lato, sans-serif; padding-left: 4px; }
.phead svg { width: 12px; height: 8px; transform: rotate(-90deg); }
.pbody { padding: 8px 10px 0 11px; display: flex; flex-direction: column; }
.intro { font-size: 7px; line-height: 10px; color: #5593d8; padding-right: 14px; }
.intro a { color: #2d4f83; }
.intro svg { width: 7px; height: 7px; vertical-align: -1px; color: #083f80; }
.topic { font: 11px/14px Raleway, Lato, sans-serif; color: #27508a; margin: 8px 0 3px; }
.chosen { display: flex; align-items: center; height: 21px; border: 1px solid #6d84a8; border-radius: 2px; padding: 0 7px 0 4px; }
.chosen .nm { margin: 0 auto 0 6px; }
.chosen svg { width: 8px; height: 8px; color: #555; display: block; }
.chosen button { border: 0; background: none; margin-left: 6px; }
.search { width: 151px; height: 20px; margin: 4px 0 0 8px; border: 1px solid #c9ced2; border-radius: 2px; padding: 0 6px; }
.search::placeholder { color: #858d91; }
.listbox { display: flex; height: 126px; margin-top: 8px; border: 1px solid #178a67; border-radius: 2px; overflow: hidden; }
.listbox ul { flex: 1; padding-top: 2px; }
.listbox li { display: flex; align-items: flex-start; gap: 3px; line-height: 10px; min-height: 17px; padding: 3px 9px 3px 13px; border-bottom: 1px solid #eef0f1; font-size: 7px; }
.listbox li span:first-child { flex: 1; padding-right: 28px; }
.listbox li svg { width: 7px; height: 7px; margin-top: 2px; color: #18bc9c; }
.listbox .pill { margin-top: 1px; }
.listbox .sel { background: #62dac1; }
.listbox .sel svg { color: #128a70; }
.listbox .bar { width: 13px; height: 124px; }
.time { display: flex; align-items: center; gap: 6px; margin-top: 8px; font-weight: 700; line-height: 14px; padding-left: 5px; }
.time svg { width: 6px; height: 8px; color: #083f80; }
.slider { appearance: none; width: 100%; height: 12px; margin-top: 4px; background: none; }
.slider::-webkit-slider-runnable-track { height: 3px; background: #ced4da; border-radius: 2px; }
.slider::-webkit-slider-thumb { appearance: none; width: 11px; height: 11px; margin-top: -4px; border-radius: 50%; background: #083f80; }
.avg { display: flex; align-items: center; margin-top: 2px; }
.avg .q { width: 8px; height: 8px; margin: 0 6px 0 3px; color: #f39c12; }
.avg .pick { width: 55px; }
.avg .control { height: 20px; padding-left: 7px; }
.avg .caret { top: 7px; }
.strat { font: 10px/14px Raleway, Lato, sans-serif; margin: 8px 0 2px; }
.slist li { line-height: 13px; padding-left: 9px; color: #5c6267; }
.slist .cur { border-left: 1px solid #1b3f74; padding-left: 8px; color: #27508a; }
.rail { width: 20px; border-left: 1px solid #27508a; display: flex; flex-direction: column; }
.rail button { height: 26px; border: 0; background: #fff; display: flex; align-items: center; justify-content: center; color: #333; }
.rail svg { width: 11px; height: 11px; }
.rail .lay { background: #e9edf2; color: #083f80; }
.rail .cur { background: #083f80; color: #fff; }
.rail .push { margin-top: auto; }
.rail .red { color: #9c1220; }
.faded { right: 247px; background: #a9a9a9; color: #333; font-size: 6px; line-height: 8px; }
.rule { border: 0; height: 2px; background: #5878a8; margin: 4px 8px 0; }
.callout { position: absolute; left: 0; top: 0; width: 100%; pointer-events: none; }
```
FILE: mesh.js
```js
// County boundary mesh: near-square cells that grow irregular towards the south-east.
(function () {
  var seed = 7;
  function rnd() { seed = (seed * 16807) % 2147483647; return seed / 2147483647 - 0.5; }
  var step = 11, x0 = 444, y0 = 266, cols = 38, rows = 23, pts = [], d = '';
  for (var r = 0; r < rows; r++) {
    pts[r] = [];
    for (var c = 0; c < cols; c++) {
      var rough = Math.max(0, Math.min(1, (c / cols + r / rows - 0.55) * 1.4));
      pts[r][c] = [x0 + c * step + rnd() * (1 + 9 * rough), y0 + r * step + rnd() * (1 + 8 * rough)];
    }
  }
  function seg(a, b) { return 'M' + a[0].toFixed(1) + ' ' + a[1].toFixed(1) + 'L' + b[0].toFixed(1) + ' ' + b[1].toFixed(1); }
  function mid(a, b) { return [(a[0] + b[0]) / 2, (a[1] + b[1]) / 2]; }
  for (r = 0; r < rows - 1; r++) {
    for (c = 0; c < cols - 1; c++) {
      d += seg(pts[r][c], pts[r][c + 1]);
      if (Math.floor(r / 3) % 2) d += seg(pts[r][c], pts[r + 1][c]);
      else d += seg(mid(pts[r][c], pts[r][c + 1]), mid(pts[r + 1][c], pts[r + 1][c + 1]));
    }
  }
  var p = document.createElementNS('http://www.w3.org/2000/svg', 'path');
  p.setAttribute('d', d);
  document.getElementById('mesh').appendChild(p);
})();
```
